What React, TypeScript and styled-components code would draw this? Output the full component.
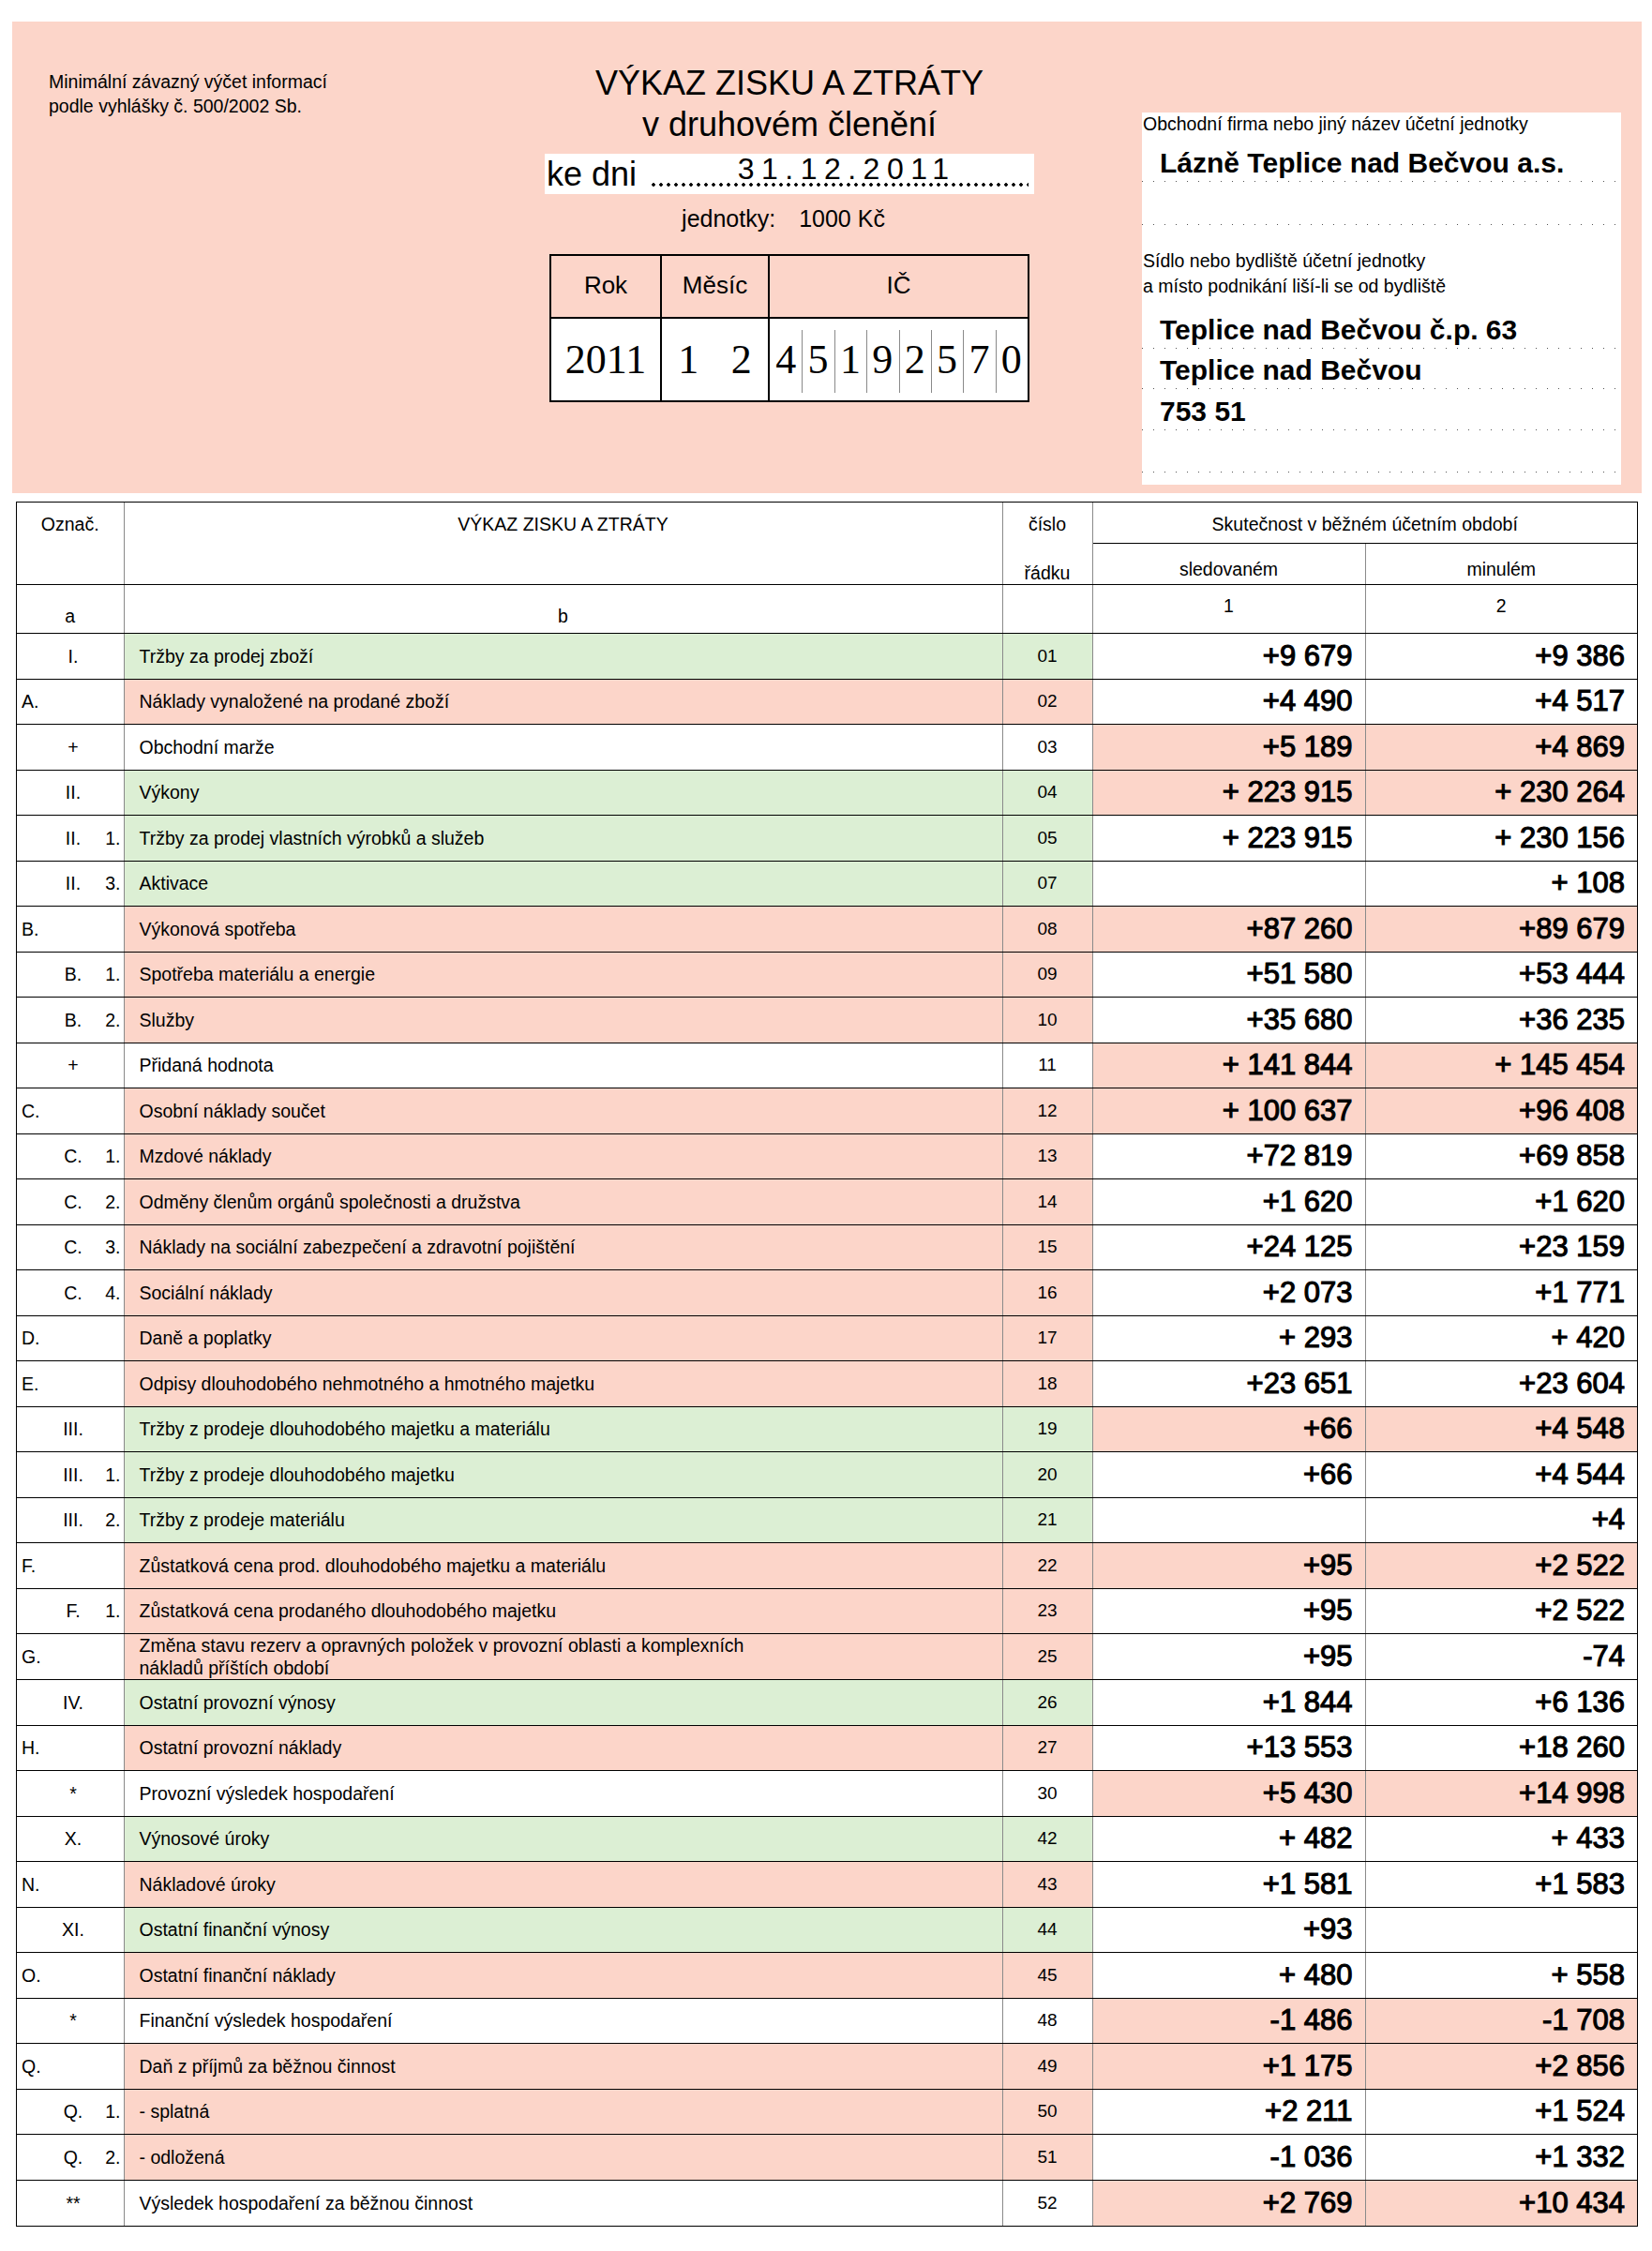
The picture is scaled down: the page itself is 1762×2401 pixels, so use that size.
import React from 'react';
import styled, { createGlobalStyle } from 'styled-components';

const SALMON = '#fcd5c9';
const GREEN = '#dcefd4';
const GRID_GRAY = '#8a8a8a';

const Global = createGlobalStyle`
  html, body { margin: 0; padding: 0; background: #fff; }
  body { font-family: "Liberation Sans", Arial, sans-serif; color: #000; }
  * { box-sizing: border-box; }
`;

const Page = styled.div`
  width: 1762px;
  padding: 23px 11px 28px 13px;
`;

/* ---------- header panel ---------- */

const Panel = styled.header`
  height: 503px;
  background: ${SALMON};
  display: grid;
  grid-template-columns: 568px 522px 1fr;
  align-items: start;
`;

const Note = styled.div`
  padding: 51px 0 0 39px;
  font-size: 19.5px;
  line-height: 26px;
`;

const Center = styled.div`
  padding-top: 44px;
  display: flex;
  flex-direction: column;
  align-items: center;
`;

const Title = styled.h1`
  margin: 0;
  font-weight: normal;
  font-size: 36px;
  line-height: 44px;
  text-align: center;
`;

const DateBox = styled.div`
  margin-top: 9px;
  width: 522px;
  height: 43px;
  background: #fff;
  display: flex;
`;

const DateLabel = styled.span`
  font-size: 36px;
  line-height: 43px;
  padding-left: 2px;
  white-space: nowrap;
`;

const Leader = styled.span`
  flex: 1;
  margin: 0 6px 0 14px;
  padding: 1px 0 0 16px;
  background-image: radial-gradient(circle, #000 0 1.5px, transparent 2px);
  background-size: 8px 4px;
  background-repeat: repeat-x;
  background-position: 0 31px;
  font-size: 32px;
  line-height: 30px;
  letter-spacing: 7.5px;
  text-align: center;
  white-space: nowrap;
`;

const Units = styled.div`
  margin-top: 11px;
  padding-right: 13px;
  font-size: 25px;
  line-height: 30px;
  display: flex;
  gap: 25px;
`;

const IdGrid = styled.div`
  margin-top: 23px;
  width: 512px;
  display: grid;
  grid-template-columns: 116px 115px 277px;
  grid-template-rows: 67px 87px;
  border: 2px solid #000;
`;

const IdHead = styled.div<{ $first?: boolean }>`
  display: flex;
  align-items: center;
  justify-content: center;
  padding-bottom: 2px;
  font-size: 26px;
  border-left: ${(p) => (p.$first ? 'none' : '2px solid #000')};
  border-bottom: 2px solid #000;
`;

const IdValue = styled.div<{ $first?: boolean }>`
  background: #fff;
  display: flex;
  border-left: ${(p) => (p.$first ? 'none' : '2px solid #000')};
  font-family: "Liberation Serif", "Times New Roman", serif;
  font-size: 44px;
`;

const Digit = styled.span<{ $sep?: boolean }>`
  flex: 1;
  display: flex;
  align-items: center;
  justify-content: center;
  background: ${(p) =>
    p.$sep
      ? `linear-gradient(${GRID_GRAY}, ${GRID_GRAY}) left 12px / 1px calc(100% - 20px) no-repeat`
      : 'none'};
`;

const Entity = styled.section`
  justify-self: end;
  margin: 97px 22px 0 0;
  width: 511px;
  height: 397px;
  background: #fff;
  display: flex;
  flex-direction: column;
`;

const FieldLabel = styled.div<{ $lh: number; $pt?: number }>`
  font-size: 19.5px;
  line-height: ${(p) => p.$lh}px;
  padding: ${(p) => p.$pt ?? 0}px 0 0 1px;
`;

const FieldLine = styled.div<{ $h: number }>`
  height: ${(p) => p.$h}px;
  flex: none;
  display: flex;
  align-items: flex-end;
  padding-left: 19px;
  font-weight: bold;
  font-size: 30px;
  line-height: 40px;
  white-space: nowrap;
  background-image: linear-gradient(to right, #555 1px, transparent 1px);
  background-size: 12px 1px;
  background-repeat: repeat-x;
  background-position: 0 100%;
`;

/* ---------- statement table ---------- */

const Frame = styled.div`
  margin: 9px 4px 0 4px;
  border: 1px solid #000;
`;

const Sheet = styled.table`
  width: 1728px;
  border-collapse: collapse;
  border-style: hidden;
  table-layout: fixed;
  font-size: 19.5px;
`;

const Row = styled.tr<{ $h: number }>`
  height: ${(p) => p.$h}px;
`;

const Head = styled.th<{ $pt?: number }>`
  border-top: 1px solid #000;
  border-bottom: 1px solid #000;
  border-left: 1px solid ${GRID_GRAY};
  border-right: 1px solid ${GRID_GRAY};
  padding: ${(p) => p.$pt ?? 0}px 0 0 0;
  vertical-align: top;
  font-weight: normal;
  line-height: 24px;
  text-align: center;
`;

const HeadGap = styled.div`
  height: 28px;
`;

const BaseCell = styled.td<{ $bg?: string }>`
  border-top: 1px solid #000;
  border-bottom: 1px solid #000;
  border-left: 1px solid ${GRID_GRAY};
  border-right: 1px solid ${GRID_GRAY};
  padding: 0;
  vertical-align: middle;
  background: ${(p) => p.$bg ?? '#fff'};
  white-space: nowrap;
`;

const MarkCell = styled(BaseCell)``;

const Mark = styled.div`
  display: grid;
  grid-template-columns: 30px 60px 1fr;
  line-height: 24px;
`;

const MarkLeft = styled.span`
  padding-left: 5px;
`;
const MarkMid = styled.span`
  text-align: center;
`;
const MarkRight = styled.span`
  text-align: right;
  padding-right: 3px;
`;

const LabelCell = styled(BaseCell)`
  padding-left: 16px;
  line-height: 24px;
`;

const NoCell = styled(BaseCell)`
  text-align: center;
  font-size: 19px;
`;

const ValueCell = styled(BaseCell)`
  text-align: right;
  padding-right: 13px;
  font-size: 31px;
  font-weight: normal;
  -webkit-text-stroke: 1.1px #000;
`;

type Tone = 'g' | 's' | 'w';

interface Line {
  l?: string;
  m?: string;
  r?: string;
  text: React.ReactNode;
  no: string;
  a?: string;
  b?: string;
  tone: Tone;
  hi?: boolean;
}

const LINES: Line[] = [
  { m: 'I.', text: 'Tržby za prodej zboží', no: '01', a: '+9 679', b: '+9 386', tone: 'g' },
  { l: 'A.', text: 'Náklady vynaložené na prodané zboží', no: '02', a: '+4 490', b: '+4 517', tone: 's' },
  { m: '+', text: 'Obchodní marže', no: '03', a: '+5 189', b: '+4 869', tone: 'w', hi: true },
  { m: 'II.', text: 'Výkony', no: '04', a: '+ 223 915', b: '+ 230 264', tone: 'g', hi: true },
  { m: 'II.', r: '1.', text: 'Tržby za prodej vlastních výrobků a služeb', no: '05', a: '+ 223 915', b: '+ 230 156', tone: 'g' },
  { m: 'II.', r: '3.', text: 'Aktivace', no: '07', b: '+ 108', tone: 'g' },
  { l: 'B.', text: 'Výkonová spotřeba', no: '08', a: '+87 260', b: '+89 679', tone: 's', hi: true },
  { m: 'B.', r: '1.', text: 'Spotřeba materiálu a energie', no: '09', a: '+51 580', b: '+53 444', tone: 's' },
  { m: 'B.', r: '2.', text: 'Služby', no: '10', a: '+35 680', b: '+36 235', tone: 's' },
  { m: '+', text: 'Přidaná hodnota', no: '11', a: '+ 141 844', b: '+ 145 454', tone: 'w', hi: true },
  { l: 'C.', text: 'Osobní náklady součet', no: '12', a: '+ 100 637', b: '+96 408', tone: 's', hi: true },
  { m: 'C.', r: '1.', text: 'Mzdové náklady', no: '13', a: '+72 819', b: '+69 858', tone: 's' },
  { m: 'C.', r: '2.', text: 'Odměny členům orgánů společnosti a družstva', no: '14', a: '+1 620', b: '+1 620', tone: 's' },
  { m: 'C.', r: '3.', text: 'Náklady na sociální zabezpečení a zdravotní pojištění', no: '15', a: '+24 125', b: '+23 159', tone: 's' },
  { m: 'C.', r: '4.', text: 'Sociální náklady', no: '16', a: '+2 073', b: '+1 771', tone: 's' },
  { l: 'D.', text: 'Daně a poplatky', no: '17', a: '+ 293', b: '+ 420', tone: 's' },
  { l: 'E.', text: 'Odpisy dlouhodobého nehmotného a hmotného majetku', no: '18', a: '+23 651', b: '+23 604', tone: 's' },
  { m: 'III.', text: 'Tržby z prodeje dlouhodobého majetku a materiálu', no: '19', a: '+66', b: '+4 548', tone: 'g', hi: true },
  { m: 'III.', r: '1.', text: 'Tržby z prodeje dlouhodobého majetku', no: '20', a: '+66', b: '+4 544', tone: 'g' },
  { m: 'III.', r: '2.', text: 'Tržby z prodeje materiálu', no: '21', b: '+4', tone: 'g' },
  { l: 'F.', text: 'Zůstatková cena prod. dlouhodobého majetku a materiálu', no: '22', a: '+95', b: '+2 522', tone: 's', hi: true },
  { m: 'F.', r: '1.', text: 'Zůstatková cena prodaného dlouhodobého majetku', no: '23', a: '+95', b: '+2 522', tone: 's' },
  {
    l: 'G.',
    text: (
      <>
        Změna stavu rezerv a opravných položek v provozní oblasti a komplexních
        <br />
        nákladů příštích období
      </>
    ),
    no: '25',
    a: '+95',
    b: '-74',
    tone: 's',
  },
  { m: 'IV.', text: 'Ostatní provozní výnosy', no: '26', a: '+1 844', b: '+6 136', tone: 'g' },
  { l: 'H.', text: 'Ostatní provozní náklady', no: '27', a: '+13 553', b: '+18 260', tone: 's' },
  { m: '*', text: 'Provozní výsledek hospodaření', no: '30', a: '+5 430', b: '+14 998', tone: 'w', hi: true },
  { m: 'X.', text: 'Výnosové úroky', no: '42', a: '+ 482', b: '+ 433', tone: 'g' },
  { l: 'N.', text: 'Nákladové úroky', no: '43', a: '+1 581', b: '+1 583', tone: 's' },
  { m: 'XI.', text: 'Ostatní finanční výnosy', no: '44', a: '+93', tone: 'g' },
  { l: 'O.', text: 'Ostatní finanční náklady', no: '45', a: '+ 480', b: '+ 558', tone: 's' },
  { m: '*', text: 'Finanční výsledek hospodaření', no: '48', a: '-1 486', b: '-1 708', tone: 'w', hi: true },
  { l: 'Q.', text: 'Daň z příjmů za běžnou činnost', no: '49', a: '+1 175', b: '+2 856', tone: 's', hi: true },
  { m: 'Q.', r: '1.', text: '- splatná', no: '50', a: '+2 211', b: '+1 524', tone: 's' },
  { m: 'Q.', r: '2.', text: '- odložená', no: '51', a: '-1 036', b: '+1 332', tone: 's' },
  { m: '**', text: 'Výsledek hospodaření za běžnou činnost', no: '52', a: '+2 769', b: '+10 434', tone: 'w', hi: true },
];

const toneColor = (t: Tone) => (t === 'g' ? GREEN : t === 's' ? SALMON : '#fff');

const IC_DIGITS = ['4', '5', '1', '9', '2', '5', '7', '0'];

export default function App() {
  return (
    <>
      <Global />
      <Page>
        <Panel>
          <Note>
            Minimální závazný výčet informací
            <br />
            podle vyhlášky č. 500/2002 Sb.
          </Note>

          <Center>
            <Title>
              VÝKAZ ZISKU A ZTRÁTY
              <br />
              v druhovém členění
            </Title>
            <DateBox>
              <DateLabel>ke dni</DateLabel>
              <Leader>31.12.2011</Leader>
            </DateBox>
            <Units>
              <span>jednotky:</span>
              <span>1000 Kč</span>
            </Units>
            <IdGrid>
              <IdHead $first>Rok</IdHead>
              <IdHead>Měsíc</IdHead>
              <IdHead>IČ</IdHead>
              <IdValue $first>
                <Digit>2011</Digit>
              </IdValue>
              <IdValue>
                <Digit>1</Digit>
                <Digit>2</Digit>
              </IdValue>
              <IdValue>
                {IC_DIGITS.map((d, i) => (
                  <Digit key={i} $sep={i > 0}>
                    {d}
                  </Digit>
                ))}
              </IdValue>
            </IdGrid>
          </Center>

          <Entity>
            <FieldLabel $lh={24}>Obchodní firma nebo jiný název účetní jednotky</FieldLabel>
            <FieldLine $h={50}>Lázně Teplice nad Bečvou a.s.</FieldLine>
            <FieldLine $h={46} />
            <FieldLabel $lh={27} $pt={25}>
              Sídlo nebo bydliště účetní jednotky
              <br />a místo podnikání liší-li se od bydliště
            </FieldLabel>
            <FieldLine $h={53}>Teplice nad Bečvou č.p. 63</FieldLine>
            <FieldLine $h={43}>Teplice nad Bečvou</FieldLine>
            <FieldLine $h={44}>753 51</FieldLine>
            <FieldLine $h={45} />
          </Entity>
        </Panel>

        <Frame>
          <Sheet>
            <colgroup>
              <col style={{ width: 114 }} />
              <col style={{ width: 937 }} />
              <col style={{ width: 96 }} />
              <col style={{ width: 291 }} />
              <col style={{ width: 290 }} />
            </colgroup>
            <thead>
              <Row $h={43}>
                <Head rowSpan={2} $pt={11}>
                  Označ.
                </Head>
                <Head rowSpan={2} $pt={11}>
                  VÝKAZ ZISKU A ZTRÁTY
                </Head>
                <Head rowSpan={2} $pt={11}>
                  číslo
                  <HeadGap />
                  řádku
                </Head>
                <Head colSpan={2} $pt={11}>
                  Skutečnost v běžném účetním období
                </Head>
              </Row>
              <Row $h={44}>
                <Head $pt={15}>sledovaném</Head>
                <Head $pt={15}>minulém</Head>
              </Row>
              <Row $h={52}>
                <Head $pt={21}>a</Head>
                <Head $pt={21}>b</Head>
                <Head />
                <Head $pt={10}>1</Head>
                <Head $pt={10}>2</Head>
              </Row>
            </thead>
            <tbody>
              {LINES.map((ln) => (
                <Row key={ln.no} $h={48.5}>
                  <MarkCell>
                    <Mark>
                      <MarkLeft>{ln.l}</MarkLeft>
                      <MarkMid>{ln.m}</MarkMid>
                      <MarkRight>{ln.r}</MarkRight>
                    </Mark>
                  </MarkCell>
                  <LabelCell $bg={toneColor(ln.tone)}>{ln.text}</LabelCell>
                  <NoCell $bg={toneColor(ln.tone)}>{ln.no}</NoCell>
                  <ValueCell $bg={ln.hi ? SALMON : '#fff'}>{ln.a}</ValueCell>
                  <ValueCell $bg={ln.hi ? SALMON : '#fff'}>{ln.b}</ValueCell>
                </Row>
              ))}
            </tbody>
          </Sheet>
        </Frame>
      </Page>
    </>
  );
}
